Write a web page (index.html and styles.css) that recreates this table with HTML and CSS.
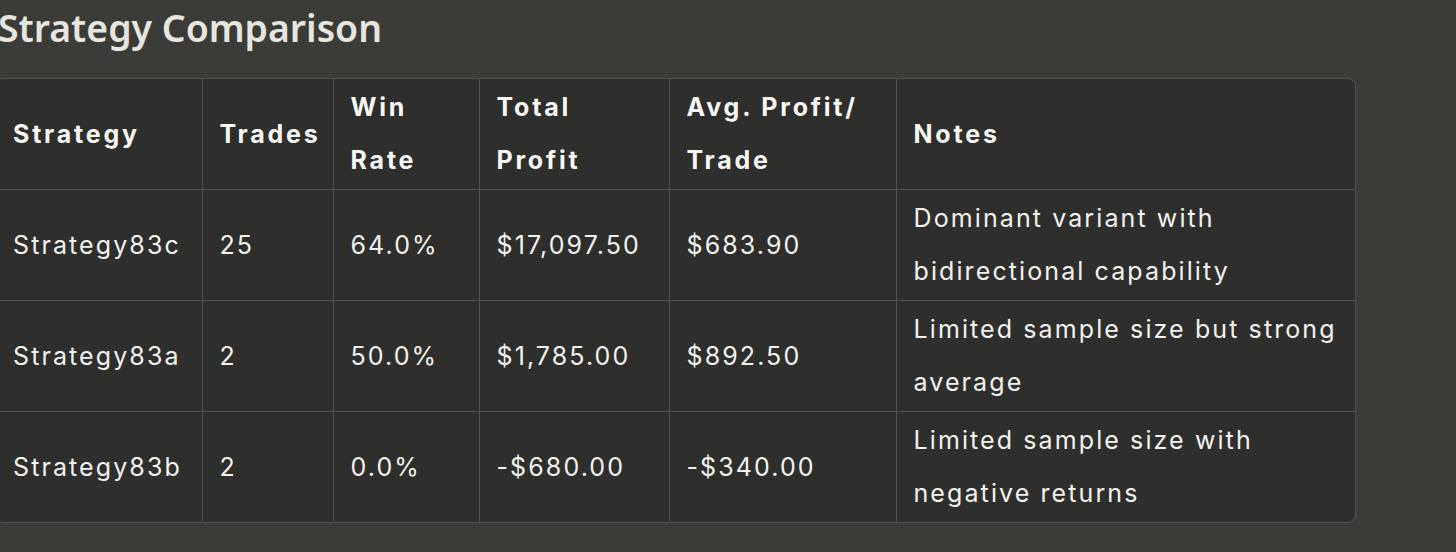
FILE: index.html
```html
<!DOCTYPE html>
<html lang="en">
<head>
    <meta charset="UTF-8">
    <meta name="viewport" content="width=device-width, initial-scale=1.0">
    <title>Strategy Comparison</title>
    <link rel="stylesheet" href="styles.css">
</head>
<body>
    <div class="page">
        <h2 class="title">Strategy Comparison</h2>

        <div class="table-wrap">
            <table class="compare">
                <colgroup>
                    <col class="c-strategy">
                    <col class="c-trades">
                    <col class="c-win">
                    <col class="c-total">
                    <col class="c-avg">
                    <col class="c-notes">
                </colgroup>
                <thead>
                    <tr>
                        <th>Strategy</th>
                        <th>Trades</th>
                        <th>Win Rate</th>
                        <th>Total Profit</th>
                        <th>Avg. Profit/ Trade</th>
                        <th>Notes</th>
                    </tr>
                </thead>
                <tbody>
                    <tr>
                        <td>Strategy83c</td>
                        <td>25</td>
                        <td>64.0%</td>
                        <td>$17,097.50</td>
                        <td>$683.90</td>
                        <td>Dominant variant with bidirectional capability</td>
                    </tr>
                    <tr>
                        <td>Strategy83a</td>
                        <td>2</td>
                        <td>50.0%</td>
                        <td>$1,785.00</td>
                        <td>$892.50</td>
                        <td>Limited sample size but strong average</td>
                    </tr>
                    <tr>
                        <td>Strategy83b</td>
                        <td>2</td>
                        <td>0.0%</td>
                        <td>-$680.00</td>
                        <td>-$340.00</td>
                        <td>Limited sample size with negative returns</td>
                    </tr>
                </tbody>
            </table>
        </div>
    </div>
</body>
</html>
```

FILE: styles.css
```css
body {
    margin: 0;
    background-color: #3b3b37;
    color: #f3f2ed;
    font-family: Inter, "Noto Sans", sans-serif;
}
.page {
    margin-left: -5px;
    padding-top: 2px;
}
.title {
    margin: 0 0 0 3px;
    font-family: "Noto Sans", sans-serif;
    font-size: 37.4px;
    font-weight: 600;
    line-height: 52px;
    color: #e6e5df;
}
.table-wrap {
    margin-top: 24px;
    width: 1359px;
    border: 1px solid #54544f;
    border-radius: 8px;
    overflow: hidden;
    background-color: #2e2e2c;
}
.compare {
    width: 100%;
    border-collapse: collapse;
    table-layout: fixed;
}
.c-strategy { width: 206px; }
.c-trades { width: 131px; }
.c-win { width: 146px; }
.c-total { width: 190px; }
.c-avg { width: 227px; }
.compare th,
.compare td {
    padding: 2px 17px;
    font-size: 25px;
    line-height: 53px;
    letter-spacing: 2.1px;
    text-align: left;
    vertical-align: middle;
    border-left: 1px solid #54544f;
    border-top: 1px solid #54544f;
}
.compare th {
    font-weight: 700;
    letter-spacing: 2.8px;
    color: #f8f7f3;
}
.compare td {
    font-weight: 400;
}
.compare tr > :first-child {
    border-left: none;
}
.compare thead tr:first-child th {
    border-top: none;
}
```
